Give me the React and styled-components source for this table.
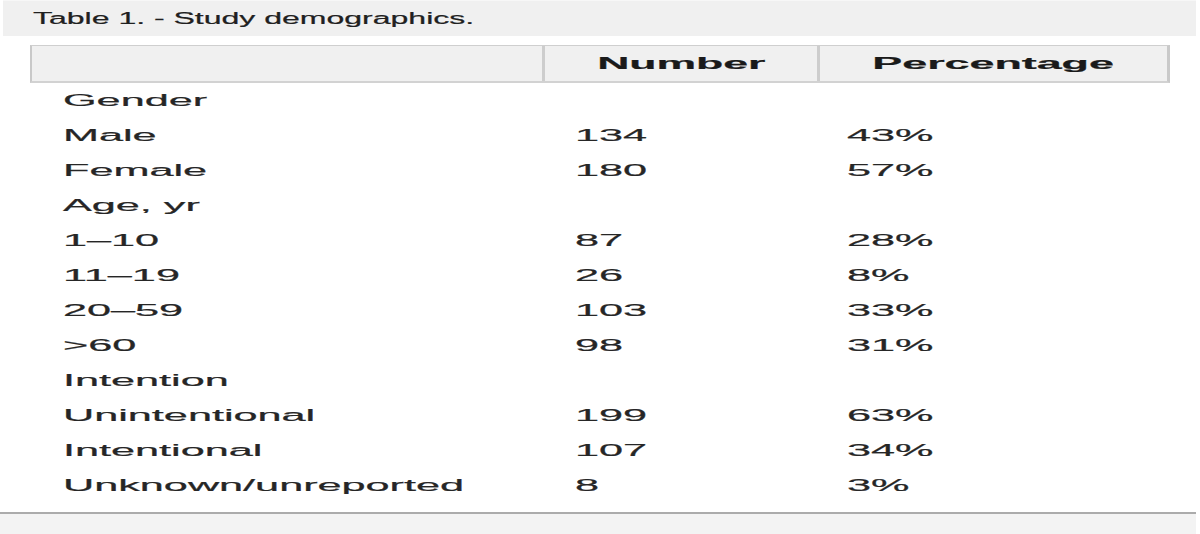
import React from 'react';
import styled, { createGlobalStyle } from 'styled-components';

const GlobalStyle = createGlobalStyle`
    html, body {
        margin: 0;
        padding: 0;
        background: #fff;
    }
    body {
        font-family: 'Liberation Sans', Arial, sans-serif;
        color: #222;
    }
`;

const Page = styled.div`
    width: 1200px;
    height: 534px;
    display: flex;
    flex-direction: column;
    overflow: hidden;
    background: #fff;
`;

const TitleBar = styled.div`
    height: 35px;
    margin: 0 4px 0 3px;
    padding-left: 30px;
    background: #f0f0f0;
    border-top: 1px solid #f7f7f7;
    display: flex;
    align-items: center;
`;

// the screenshot is stretched sideways, so each text run is widened
const Stretch = styled.span`
    display: inline-block;
    white-space: nowrap;
    -webkit-text-stroke: 0.2px currentColor;
    transform: scaleX(${({ $x }) => $x});
    transform-origin: ${({ $center }) => ($center ? 'center' : 'left')} center;
`;

const TitleText = styled.span`
    font-size: 16px;
    color: #202020;
`;

const Table = styled.div`
    margin: 9px 0 0 30px;
    width: 1140px;
    display: flex;
    flex-direction: column;
`;

const HeadRow = styled.div`
    display: grid;
    grid-template-columns: 510px 275px 350px;
    height: 38px;
    box-sizing: border-box;
    background: #f0f0f0;
    border-top: 1px solid #cfcfcf;
    border-bottom: 2px solid #d2d2d2;
    border-left: 2px solid #c9c9c9;
    border-right: 3px solid #c9c9c9;
`;

const HeadCell = styled.div`
    display: flex;
    align-items: center;
    justify-content: center;
    font-size: 16px;
    font-weight: bold;
    color: #1a1a1a;
    & + & {
        border-left: 3px solid #cdcdcd;
    }
`;

const Row = styled.div`
    display: grid;
    grid-template-columns: 512px 275px 353px;
    height: 35px;
    align-items: center;
`;

const Cell = styled.div`
    padding-left: ${({ $pad }) => $pad}px;
    font-size: 16px;
    color: #262626;
`;

const Footer = styled.div`
    margin-top: auto;
    height: 20px;
    margin-right: 4px;
    background: #f3f3f3;
    border-top: 2px solid #ababab;
`;

const rows = [
    ['Gender', '', ''],
    ['Male', '134', '43%'],
    ['Female', '180', '57%'],
    ['Age, yr', '', ''],
    ['1–10', '87', '28%'],
    ['11–19', '26', '8%'],
    ['20–59', '103', '33%'],
    ['>60', '98', '31%'],
    ['Intention', '', ''],
    ['Unintentional', '199', '63%'],
    ['Intentional', '107', '34%'],
    ['Unknown/unreported', '8', '3%'],
];

const SX = 2.7;

const App = () => (
    <>
        <GlobalStyle />
        <Page>
            <TitleBar>
                <TitleText>
                    <Stretch $x={2.0}>Table 1. - Study demographics.</Stretch>
                </TitleText>
            </TitleBar>
            <Table>
                <HeadRow>
                    <HeadCell />
                    <HeadCell><Stretch $x={2.78} $center>Number</Stretch></HeadCell>
                    <HeadCell><Stretch $x={2.8} $center>Percentage</Stretch></HeadCell>
                </HeadRow>
                {rows.map(([label, num, pct]) => (
                    <Row key={label}>
                        <Cell $pad={33}><Stretch $x={SX}>{label}</Stretch></Cell>
                        <Cell $pad={33}><Stretch $x={SX}>{num}</Stretch></Cell>
                        <Cell $pad={30}><Stretch $x={SX}>{pct}</Stretch></Cell>
                    </Row>
                ))}
            </Table>
            <Footer />
        </Page>
    </>
);

export default App;
